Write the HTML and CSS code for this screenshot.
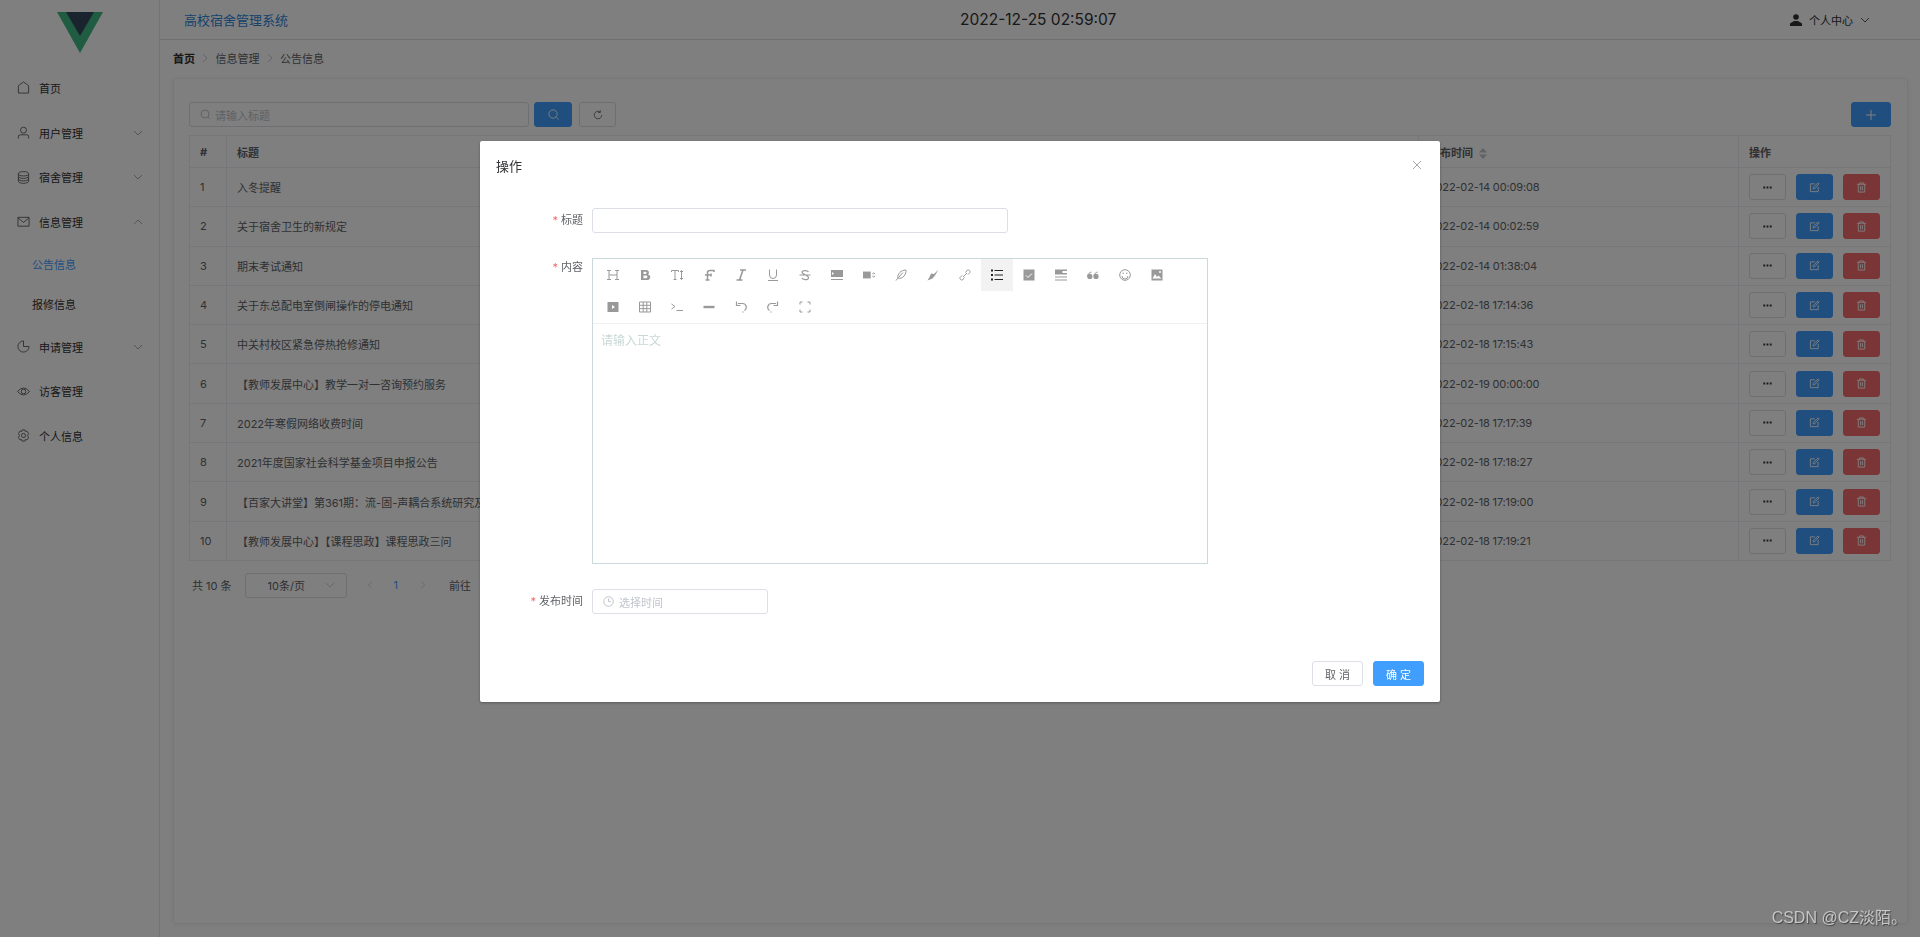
FILE: index.html
```html
<!DOCTYPE html>
<html>
  <head>
    <title>高校宿舍管理系统</title>
    <link rel="stylesheet" href="styles.css">
    <meta name="viewport" content="width=device-width, initial-scale=1.0">
  </head>

  <body>
    <svg class="sprite" width="0" height="0">
      <symbol id="i-chev" viewBox="0 0 10 10"><path d="M1 3l4 4 4-4" fill="none" stroke="currentColor" stroke-width="0.8"/></symbol>
      <symbol id="i-chev-up" viewBox="0 0 10 10"><path d="M1 7l4-4 4 4" fill="none" stroke="currentColor" stroke-width="0.8"/></symbol>
      <symbol id="i-next" viewBox="0 0 10 10"><path d="M3 1l4 4-4 4" fill="none" stroke="currentColor" stroke-width="0.9"/></symbol>
      <symbol id="i-prev" viewBox="0 0 10 10"><path d="M7 1L3 5l4 4" fill="none" stroke="currentColor" stroke-width="0.9"/></symbol>
      <symbol id="i-dots" viewBox="0 0 12 12"><path d="M1.5 5h2v2h-2zM5 5h2v2H5zM8.500 5h2v2h-2z" fill="currentColor"/></symbol>
      <symbol id="i-edit" viewBox="0 0 12 12"><path d="M6.500 2H1.500v8.500H10V5.500M4.500 7.500V6L10 1l1 1-5 5.500z" fill="none" stroke="currentColor"/></symbol>
      <symbol id="i-trash" viewBox="0 0 12 12"><path d="M1 2.500h10M4 2.500V1h4v1.500M2.500 2.500V11h7V2.500M5 4.500V9M7 4.500V9" fill="none" stroke="currentColor"/></symbol>
    </svg>

    <div class="app">
      <aside class="sidebar">
        <div class="logo">
          <svg width="48" height="42" viewBox="0 0 48 42">
            <path d="M1 0h46L24 41z" fill="#41b883"/>
            <path d="M10 0h28L24 24z" fill="#34495e"/>
          </svg>
        </div>
        <nav class="menu">
          <div class="menu-item">
            <svg class="menu-icon" viewBox="0 0 14 14"><path d="M1.500 13V5L7 1l5.500 4v8z" fill="none" stroke="currentColor"/></svg>
            <span>首页</span>
          </div>
          <div class="menu-item">
            <svg class="menu-icon" viewBox="0 0 14 14"><circle cx="7" cy="4.500" r="3.200" fill="none" stroke="currentColor"/><path d="M1.500 13.500V11q0-1.500 2-1.500h7q2 0 2 1.500v2.500" fill="none" stroke="currentColor"/></svg>
            <span>用户管理</span>
            <svg class="chev"><use href="#i-chev"/></svg>
          </div>
          <div class="menu-item">
            <svg class="menu-icon" viewBox="0 0 14 14"><ellipse cx="7" cy="3" rx="5.500" ry="2.300" fill="none" stroke="currentColor"/><path d="M1.500 3v8c0 1.300 2.500 2.300 5.500 2.300s5.500-1 5.500-2.300V3M1.500 5.700C1.500 7 4 8 7 8s5.500-1 5.500-2.300M1.500 8.400c0 1.300 2.500 2.300 5.500 2.300s5.500-1 5.500-2.300" fill="none" stroke="currentColor"/></svg>
            <span>宿舍管理</span>
            <svg class="chev"><use href="#i-chev"/></svg>
          </div>
          <div class="menu-item">
            <svg class="menu-icon" viewBox="0 0 14 14"><path d="M1 2.500h12v9.500H1zM1 3l6 5 6-5" fill="none" stroke="currentColor"/></svg>
            <span>信息管理</span>
            <svg class="chev"><use href="#i-chev-up"/></svg>
          </div>
          <div class="submenu-item active">公告信息</div>
          <div class="submenu-item">报修信息</div>
          <div class="menu-item">
            <svg class="menu-icon" viewBox="0 0 14 14"><path d="M7 1a6 6 0 1 0 6 6H7z" fill="none" stroke="currentColor"/></svg>
            <span>申请管理</span>
            <svg class="chev"><use href="#i-chev"/></svg>
          </div>
          <div class="menu-item">
            <svg class="menu-icon" viewBox="0 0 14 14"><path d="M.5 7Q7-.5 13.500 7 7 14.500.5 7z" fill="none" stroke="currentColor"/><circle cx="7" cy="7" r="2.500" fill="none" stroke="currentColor"/></svg>
            <span>访客管理</span>
          </div>
          <div class="menu-item">
            <svg class="menu-icon" viewBox="0 0 14 14"><path d="M5.500 1h3l.5 1.700 1.700-.5L12.500 5l-1.200 2 1.200 2-1.800 2.800-1.700-.5-.5 1.700h-3L5 11.300l-1.700.5L1.500 9l1.200-2-1.200-2 1.800-2.800 1.700.5z" fill="none" stroke="currentColor"/><circle cx="7" cy="7" r="2.200" fill="none" stroke="currentColor"/></svg>
            <span>个人信息</span>
          </div>
        </nav>
      </aside>

      <div class="main">
        <header class="topbar">
          <div class="sys-name">高校宿舍管理系统</div>
          <div class="clock">2022-12-25 02:59:07</div>
          <div class="user-menu">
            <svg width="12" height="12" viewBox="0 0 12 12"><circle cx="6" cy="3" r="2.800" fill="currentColor"/><path d="M0 12V9.500L4 7h4l4 2.500V12z" fill="currentColor"/></svg>
            <span>个人中心</span>
            <svg class="chev"><use href="#i-chev"/></svg>
          </div>
        </header>

        <div class="crumbs">
          <b>首页</b>
          <svg class="crumb-sep"><use href="#i-next"/></svg>
          <span>信息管理</span>
          <svg class="crumb-sep"><use href="#i-next"/></svg>
          <span>公告信息</span>
        </div>

        <section class="card">
          <div class="tools">
            <div class="search-box">
              <svg width="11" height="11" viewBox="0 0 11 11"><circle cx="5" cy="5" r="4" fill="none" stroke="currentColor"/><path d="M8 8l2 2" stroke="currentColor"/></svg>
              <span>请输入标题</span>
            </div>
            <button class="btn btn-blue btn-search">
              <svg width="11" height="11" viewBox="0 0 12 12"><circle cx="5.500" cy="5.500" r="4.500" fill="none" stroke="currentColor"/><path d="M9 9l2.500 2.500" stroke="currentColor"/></svg>
            </button>
            <button class="btn btn-reset">
              <svg width="10" height="10" viewBox="0 0 12 12"><path d="M10.500 6A4.500 4.500 0 1 1 8.500 2.300M8.800.5v2.500H6.300" fill="none" stroke="currentColor"/></svg>
            </button>
            <button class="btn btn-blue btn-add">
              <svg width="12" height="12" viewBox="0 0 12 12"><path d="M6 1v10M1 6h10" stroke="currentColor"/></svg>
            </button>
          </div>

          <table class="notice-table">
            <colgroup>
              <col class="col-num"><col><col class="col-time"><col class="col-ops">
            </colgroup>
            <thead>
              <tr>
                <th>#</th>
                <th>标题</th>
                <th>发布时间 <svg class="sort" viewBox="0 0 8 11"><path d="M0 4.500L4 0l4 4.500zM0 6.500L4 11l4-4.500z" fill="currentColor"/></svg></th>
                <th>操作</th>
              </tr>
            </thead>
            <tbody id="rows"></tbody>
          </table>

          <div class="pager">
            <span>共 10 条</span>
            <div class="page-size">10条/页 <svg class="chev"><use href="#i-chev"/></svg></div>
            <svg class="page-arrow"><use href="#i-prev"/></svg>
            <span class="page-now">1</span>
            <svg class="page-arrow"><use href="#i-next"/></svg>
            <span class="page-go">前往</span>
          </div>
        </section>
      </div>
    </div>

    <div class="overlay">
      <div class="dialog">
        <div class="dialog-head">
          <span>操作</span>
          <svg class="dialog-close" width="10" height="10" viewBox="0 0 10 10"><path d="M1 1l8 8M9 1l-8 8" stroke="currentColor" stroke-width="0.8"/></svg>
        </div>

        <div class="form-row">
          <label class="form-label">标题</label>
          <div class="text-input"></div>
        </div>

        <div class="form-row">
          <label class="form-label form-label-top">内容</label>
          <div class="editor">
            <div class="ed-bar">
              <div class="ed-row">
                <span class="ed-btn"><svg viewBox="0 0 12 12"><path d="M0 1.500h4M8 1.500h4M0 10.500h4M8 10.500h4M2 1.500v9M10 1.500v9M2 6h8" fill="none" stroke="currentColor"/></svg></span>
                <span class="ed-btn"><svg viewBox="0 0 12 12"><path fill-rule="evenodd" d="M2 1h5.500a2.500 2.500 0 0 1 1.500 4.500A2.800 2.800 0 0 1 7.800 11H2zM4.500 2.700v2.300h2a1.100 1.100 0 0 0 0-2.300zM4.500 6.500v2.800h2.500a1.400 1.400 0 0 0 0-2.800z" fill="currentColor"/></svg></span>
                <span class="ed-btn"><svg viewBox="0 0 12 12"><path d="M.5 3V1.500h7V3M4 1.500v9M2.500 10.500h3M10.500 1.500v9M9 3l1.500-1.500L12 3M9 9l1.500 1.500L12 9" fill="none" stroke="currentColor"/></svg></span>
                <span class="ed-btn"><svg viewBox="0 0 12 12"><path d="M2.500 11h4M4.500 11V3.500Q4.500 1.500 7 1.500h4v1.500M2 6h6.500M8 4.500v3" fill="none" stroke="currentColor" stroke-width="1.500"/></svg></span>
                <span class="ed-btn"><svg viewBox="0 0 12 12"><path d="M5 1h6M1.500 11h6M8 1L4.500 11" fill="none" stroke="currentColor" stroke-width="1.600"/></svg></span>
                <span class="ed-btn"><svg viewBox="0 0 12 12"><path d="M2.500 .5v5.500a3.500 3.500 0 0 0 7 0V.5M1 11.500h10" fill="none" stroke="currentColor"/></svg></span>
                <span class="ed-btn"><svg viewBox="0 0 12 12"><path d="M9.500 3C8.500 1 3 1 3 3.300S9.500 6 9.500 8.700 4 11 3 9M0.500 6h11" fill="none" stroke="currentColor" stroke-width="1.200"/></svg></span>
                <span class="ed-btn"><svg viewBox="0 0 12 12"><path d="M0 1h12v7H0zM0 10h12v1H0z" fill="currentColor"/><path d="M1 3l2 1.500L1 6z" fill="#fff"/></svg></span>
                <span class="ed-btn"><svg viewBox="0 0 14 12"><path d="M0 2h9v8H0z" fill="currentColor"/><path d="M10.500 4.500H14M10.500 7.500H14M12 3l2 1.500M12 9l2-1.500" stroke="currentColor" stroke-width="0.800" fill="none"/></svg></span>
                <span class="ed-btn"><svg viewBox="0 0 12 12"><path d="M1 11.500L3 9M3 9C2 5 6 1 11 1c.5 4-3 9.500-8 8zM3.500 8.500L8 3.500" fill="none" stroke="currentColor"/></svg></span>
                <span class="ed-btn"><svg viewBox="0 0 12 12"><path d="M11.500 .5L8 6.500 5.500 9.500 .5 11.500 2.500 8 4 4.500 7 5z" fill="currentColor"/></svg></span>
                <span class="ed-btn"><svg viewBox="0 0 12 12"><path d="M6.500 3.500l2-2.500a2 2 0 0 1 2.500 2.500L9 5.500M5.500 8.500l-2 2.500A2 2 0 0 1 1 8.500L3 6.500M4 8l4-4" fill="none" stroke="currentColor"/></svg></span>
                <span class="ed-btn ed-on"><svg viewBox="0 0 12 12"><path d="M3.500 1.500H12M3.500 6H12M3.500 10.500H12" stroke="currentColor" stroke-width="1.200"/><path d="M0 .5h2v2H0zM0 5h2v2H0zM0 9.500h2v2H0z" fill="currentColor"/></svg></span>
                <span class="ed-btn"><svg viewBox="0 0 12 12"><path d="M.500.500h11v11H.500z" fill="currentColor"/><path d="M3 6.500L5 8.500 9 4.500" fill="none" stroke="#fff"/></svg></span>
                <span class="ed-btn"><svg viewBox="0 0 12 12"><path d="M0 .5h12v1.500H7.500v2H12v1.500H0z" fill="currentColor"/><path d="M0 8h12M0 11h12" stroke="currentColor"/></svg></span>
                <span class="ed-btn"><svg viewBox="0 0 12 12"><circle cx="2.800" cy="7.400" r="2.600" fill="currentColor"/><circle cx="9" cy="7.400" r="2.600" fill="currentColor"/><path d="M.7 7C.7 5 2.500 3.500 4.500 3M7 7C7 5 8.700 3.500 10.700 3" fill="none" stroke="currentColor"/></svg></span>
                <span class="ed-btn"><svg viewBox="0 0 12 12"><circle cx="6" cy="6" r="5.300" fill="none" stroke="currentColor"/><path d="M3 7a3 3 0 0 0 6 0" fill="none" stroke="currentColor"/><path d="M3.500 4.200h1.500M7 4.200h1.500" stroke="currentColor"/></svg></span>
                <span class="ed-btn"><svg viewBox="0 0 12 12"><path d="M.500.500h11v11H.500z" fill="currentColor"/><path d="M1.500 9.500L4 5l2 3 1.500-1.500 3 3z" fill="#fff"/><circle cx="9" cy="3" r="1" fill="#fff"/></svg></span>
              </div>
              <div class="ed-row">
                <span class="ed-btn"><svg viewBox="0 0 12 12"><path d="M.500 1h11v10H.500z" fill="currentColor"/><path d="M5 4l3 2-3 2z" fill="#fff"/></svg></span>
                <span class="ed-btn"><svg viewBox="0 0 12 12"><path d="M.500 1h11v10H.500zM.500 4.300h11M.500 7.600h11M4.200 1v10M7.800 1v10" fill="none" stroke="currentColor"/></svg></span>
                <span class="ed-btn"><svg viewBox="0 0 12 12"><path d="M.500 3l3.500 2.500L.5 8M5.500 9.500H12" fill="none" stroke="currentColor"/></svg></span>
                <span class="ed-btn"><svg viewBox="0 0 12 12"><path d="M.500 4.800h11v2.400H.500z" fill="currentColor"/></svg></span>
                <span class="ed-btn"><svg viewBox="0 0 12 12"><path d="M3 2.500h4.500a3.800 3.800 0 0 1 2 7M1.500.5v4h4M8 10.500v1" fill="none" stroke="currentColor" stroke-width="1.200"/></svg></span>
                <span class="ed-btn"><svg viewBox="0 0 12 12"><path d="M9 2.500H4.500a3.800 3.800 0 0 0-2 7M10.500.5v4h-4M4 10.500v1" fill="none" stroke="currentColor" stroke-width="1.200"/></svg></span>
                <span class="ed-btn"><svg viewBox="0 0 12 12"><path d="M3.500 1H1v2.500M8.500 1H11v2.500M3.500 11H1V8.500M8.500 11H11V8.500" fill="none" stroke="currentColor"/></svg></span>
              </div>
            </div>
            <div class="ed-body">请输入正文</div>
          </div>
        </div>

        <div class="form-row">
          <label class="form-label">发布时间</label>
          <div class="time-input">
            <svg width="11" height="11" viewBox="0 0 11 11"><circle cx="5.500" cy="5.500" r="4.800" fill="none" stroke="currentColor"/><path d="M5.500 2.500v3h2.500" fill="none" stroke="currentColor"/></svg>
            <span>选择时间</span>
          </div>
        </div>

        <div class="dialog-foot">
          <button class="foot-btn">取 消</button>
          <button class="foot-btn foot-ok">确 定</button>
        </div>
      </div>
    </div>

    <div class="watermark">CSDN @CZ淡陌。</div>

    <script>
      const notices = [
        ["入冬提醒", "2022-02-14 00:09:08"],
        ["关于宿舍卫生的新规定", "2022-02-14 00:02:59"],
        ["期末考试通知", "2022-02-14 01:38:04"],
        ["关于东总配电室倒闸操作的停电通知", "2022-02-18 17:14:36"],
        ["中关村校区紧急停热抢修通知", "2022-02-18 17:15:43"],
        ["【教师发展中心】教学一对一咨询预约服务", "2022-02-19 00:00:00"],
        ["2022年寒假网络收费时间", "2022-02-18 17:17:39"],
        ["2021年度国家社会科学基金项目申报公告", "2022-02-18 17:18:27"],
        ["【百家大讲堂】第361期：流-固-声耦合系统研究及应用", "2022-02-18 17:19:00"],
        ["【教师发展中心】【课程思政】课程思政三问", "2022-02-18 17:19:21"]
      ];

      const rows = document.getElementById("rows");

      // Build the table rows
      notices.forEach((n, i) => {
        const tr = document.createElement("tr");
        tr.innerHTML = `<td>${i + 1}</td><td>${n[0]}</td><td class="date-cell">${n[1]}</td>
          <td><div class="ops">
            <button class="op-btn op-more"><svg><use href="#i-dots"/></svg></button>
            <button class="op-btn op-edit"><svg><use href="#i-edit"/></svg></button>
            <button class="op-btn op-del"><svg><use href="#i-trash"/></svg></button>
          </div></td>`;
        rows.appendChild(tr);
      });
    </script>
  </body>
</html>
```

FILE: styles.css
```css
body,
html {
  margin: 0;
  padding: 0;
  height: 100%;
  overflow: hidden;
  font-family: "Inter", "Noto Sans CJK SC", sans-serif;
  font-size: 11px;
  color: #303133;
  background-color: #fff;
}

.sprite {
  position: absolute;
}

.app {
  display: flex;
  height: 937px;
}

.chev {
  width: 10px;
  height: 10px;
}

/* sidebar */
.sidebar {
  width: 159px;
  flex: none;
  border-right: 1px solid #e6e6e6;
}

.logo {
  height: 65.5px;
  display: flex;
  justify-content: center;
  padding-top: 12px;
  box-sizing: border-box;
}

.menu-item {
  height: 44.7px;
  display: flex;
  align-items: center;
  padding-left: 17px;
  padding-right: 16px;
}

.menu-item span {
  flex: 1;
}

.menu-icon {
  width: 13px;
  height: 13px;
  margin-right: 9px;
  color: #606266;
}

.menu-item .chev {
  color: #909399;
}

.submenu-item {
  height: 40px;
  line-height: 42px;
  padding-left: 32px;
}

.active {
  color: #409eff;
}

/* top */
.main {
  flex: 1;
  min-width: 0;
}

.topbar {
  height: 39px;
  border-bottom: 1px solid #e0e0e0;
  display: flex;
  align-items: center;
  padding-left: 24px;
}

.sys-name {
  color: #2f86d9;
  font-size: 13px;
  width: 776px;
}

.clock {
  font-size: 15.5px;
  width: 830px;
}

.user-menu {
  display: flex;
  align-items: center;
  gap: 7px;
  color: #303133;
}

.crumbs {
  height: 36px;
  margin-bottom: 2px;
  display: flex;
  align-items: center;
  padding-left: 13px;
  color: #606266;
}

.crumbs b {
  color: #303133;
}

.crumb-sep {
  width: 10px;
  height: 10px;
  margin: 0 5.5px 0 5px;
  color: #c0c4cc;
}

.card {
  margin-left: 13px;
  margin-right: 12px;
  height: 846px;
  box-sizing: border-box;
  border: 1px solid #ebeef5;
  border-radius: 3px;
  padding: 23px 16px 0 15px;
  box-shadow: 0 1px 6px rgba(0, 0, 0, 0.06);
}

.tools {
  display: flex;
  align-items: center;
  height: 25px;
  margin-bottom: 8px;
}

.search-box {
  width: 340px;
  height: 25px;
  box-sizing: border-box;
  border: 1px solid #dcdfe6;
  border-radius: 3px;
  display: flex;
  align-items: center;
  gap: 4px;
  padding-left: 10px;
  color: #c0c4cc;
}

.btn {
  height: 25px;
  border-radius: 3px;
  border: 1px solid #dcdfe6;
  background: #fff;
  padding: 0;
  display: flex;
  align-items: center;
  justify-content: center;
}

.btn-blue {
  background: #409eff;
  border-color: #409eff;
  color: #fff;
}

.btn-search {
  width: 38px;
  margin-left: 5px;
}

.btn-reset {
  width: 37px;
  margin-left: 7px;
  color: #606266;
}

.btn-add {
  width: 40px;
  margin-left: auto;
}

/* table */
.notice-table {
  width: 100%;
  table-layout: fixed;
  border-collapse: collapse;
  color: #606266;
  font-size: 11px;
}

.col-num {
  width: 37px;
}

.col-time {
  width: 320px;
}

.col-ops {
  width: 152px;
}

.notice-table th,
.notice-table td {
  border: 1px solid #ebeef5;
  padding: 0 0 0 10px;
  text-align: left;
  white-space: nowrap;
  overflow: hidden;
}

.notice-table th {
  height: 32px;
  box-sizing: border-box;
  color: #606266;
}

.notice-table td {
  height: 39.3px;
  box-sizing: border-box;
}

.date-cell {
  letter-spacing: -0.15px;
}

.sort {
  width: 8px;
  height: 11px;
  vertical-align: -2px;
  margin-left: 3px;
  color: #c0c4cc;
}

.ops {
  display: flex;
  gap: 10px;
}

.op-btn {
  width: 37px;
  height: 26px;
  box-sizing: border-box;
  border-radius: 3px;
  border: 1px solid #dcdfe6;
  background: #fff;
  padding: 0;
  display: flex;
  align-items: center;
  justify-content: center;
}

.op-btn svg {
  width: 11px;
  height: 11px;
}

.op-more {
  color: #303133;
}

.op-edit {
  background: #409eff;
  border-color: #409eff;
  color: #fff;
}

.op-del {
  background: #f56c6c;
  border-color: #f56c6c;
  color: #fff;
}

/* pagination */
.pager {
  display: flex;
  align-items: center;
  height: 25px;
  margin-top: 12px;
  padding-left: 3px;
  color: #606266;
}

.page-size {
  width: 102px;
  height: 25px;
  box-sizing: border-box;
  border: 1px solid #dcdfe6;
  border-radius: 3px;
  margin-left: 13px;
  display: flex;
  align-items: center;
  justify-content: space-between;
  padding: 0 11px 0 22px;
}

.page-size .chev {
  color: #c0c4cc;
}

.page-arrow {
  width: 8px;
  height: 8px;
  color: #c0c4cc;
  margin-left: 19px;
}

.page-now {
  color: #409eff;
  margin-left: 20px;
  margin-right: 2px;
}

.page-go {
  margin-left: 22px;
}

/* dialog */
.overlay {
  position: fixed;
  left: 0;
  top: 0;
  width: 100%;
  height: 100%;
  background-color: rgba(0, 0, 0, 0.5);
}

.dialog {
  width: 960px;
  height: 561px;
  margin: 141px auto 0;
  background: #fff;
  border-radius: 2px;
  box-shadow: 0 1px 3px rgba(0, 0, 0, 0.3);
  color: #606266;
  box-sizing: border-box;
  display: flex;
  flex-direction: column;
}

.dialog-head {
  height: 67px;
  flex: none;
  padding: 16px 18px 0 16px;
  box-sizing: border-box;
  display: flex;
  justify-content: space-between;
  font-size: 13px;
  line-height: 18px;
  color: #303133;
}

.dialog-close {
  color: #909399;
  margin-top: 3px;
}

.form-row {
  display: flex;
  margin-bottom: 25px;
}

.form-label {
  width: 103px;
  flex: none;
  margin-right: 9px;
  text-align: right;
  line-height: 25px;
}

.form-label-top {
  line-height: 18px;
}

.form-label::before {
  content: "*";
  color: #f56c6c;
  margin-right: 3px;
}

.text-input {
  width: 416px;
  height: 25px;
  box-sizing: border-box;
  border: 1px solid #dcdfe6;
  border-radius: 3px;
}

.time-input {
  width: 176px;
  height: 25px;
  box-sizing: border-box;
  border: 1px solid #dcdfe6;
  border-radius: 3px;
  display: flex;
  align-items: center;
  gap: 5px;
  padding-left: 10px;
  color: #c0c4cc;
}

/* markdown editor */
.editor {
  width: 616px;
  height: 306px;
  box-sizing: border-box;
  border: 1px solid #ccd9dc;
}

.ed-bar {
  height: 65px;
  box-sizing: border-box;
  border-bottom: 1px solid #f0f0f0;
  padding-left: 4px;
}

.ed-row {
  display: flex;
}

.ed-btn {
  width: 32px;
  height: 32px;
  display: flex;
  align-items: center;
  justify-content: center;
  color: #999;
}

.ed-btn svg {
  width: 12px;
  height: 12px;
}

.ed-on {
  background: #f2f2f2;
  color: #222;
}

.ed-body {
  padding: 9px 8px 8px;
  color: #c9d8d6;
  line-height: 16px;
  font-size: 12px;
}

.dialog-foot {
  margin-top: auto;
  padding: 0 16px 16px 0;
  display: flex;
  justify-content: flex-end;
  gap: 10px;
}

.foot-btn {
  width: 51px;
  height: 25px;
  box-sizing: border-box;
  border: 1px solid #dcdfe6;
  border-radius: 3px;
  background: #fff;
  color: #606266;
  font-family: inherit;
  font-size: 11px;
  padding: 0;
}

.foot-ok {
  background: #409eff;
  border-color: #409eff;
  color: #fff;
}

.watermark {
  position: fixed;
  right: 13px;
  bottom: 9px;
  font-size: 16px;
  line-height: 20px;
  font-family: "Liberation Sans", "Noto Sans CJK SC", sans-serif;
  color: #c6c6c6;
  text-shadow: 1px 1px 1px #444;
}
```
